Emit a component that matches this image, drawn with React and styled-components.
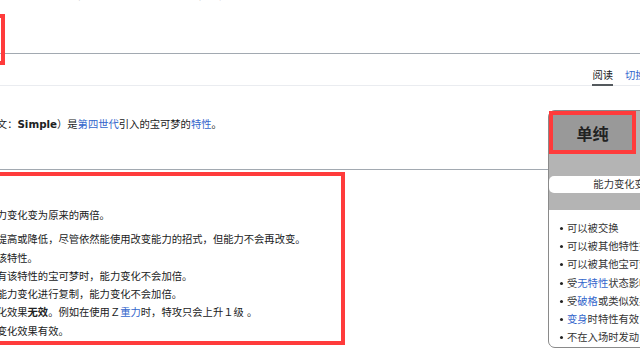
import React from "react";
import styled, { createGlobalStyle } from "styled-components";

const GlobalStyle = createGlobalStyle`
  html, body {
    margin: 0;
    padding: 0;
    background: #fff;
    overflow: hidden;
  }
  body {
    font-family: "DejaVu Sans", "Noto Sans CJK SC", sans-serif;
    font-size: 10.3px;
    color: #202122;
  }
  #root {
    width: 640px;
    height: 360px;
    overflow: hidden;
  }
`;

const RED = "#ff3b3b";
const LINK = "#3366cc";

const Page = styled.div`
  position: relative;
  display: flow-root;
  box-sizing: border-box;
  width: 893px;
  margin-left: -137px;
  padding-right: 4px;
`;

const Notice = styled.div`
  height: 14px;
  margin-top: -12px;
  padding-left: 170px;
  line-height: 14px;
  color: #54595d;
  white-space: nowrap;
`;

const Header = styled.header`
  display: flex;
  align-items: flex-end;
  height: 51px;
  border-bottom: 1px solid #a2a9b1;
`;

const Title = styled.h1`
  margin: 0 0 4px;
  font-family: "Liberation Serif", "Noto Sans CJK SC", serif;
  font-size: 22px;
  font-weight: normal;
  line-height: 30px;
`;

/* annotation frame drawn over the page title */
const TitleMark = styled.span`
  position: absolute;
  left: 60px;
  top: 14px;
  width: 82px;
  height: 51px;
  box-sizing: border-box;
  border: 4px solid ${RED};
`;

const Tabs = styled.nav`
  display: flex;
  justify-content: flex-end;
  align-items: flex-end;
  gap: 12px;
  height: 31px;
  border-bottom: 1px solid #eaecf0;
`;

const Tab = styled.a`
  margin-bottom: -1px;
  line-height: 18px;
  border-bottom: 2px solid ${({ $active }) => ($active ? "#54595d" : "transparent")};
  color: ${({ $active }) => ($active ? "#202122" : LINK)};
  text-decoration: none;
`;

const Body = styled.div`
  display: flex;
  align-items: flex-start;
`;

const Main = styled.main`
  flex: 1;
  min-width: 0;
  padding-top: 29px;
`;

const Lead = styled.p`
  margin: 0;
  line-height: 18.3px;
  white-space: nowrap;
`;

const Link = styled.a`
  color: ${LINK};
  text-decoration: none;
`;

const SectionTitle = styled.h2`
  margin: 17px 0 2px;
  font-family: "Liberation Serif", "Noto Sans CJK SC", serif;
  font-size: 14px;
  font-weight: normal;
  line-height: 19px;
  border-bottom: 1px solid #a2a9b1;
`;

const EffectBox = styled.section`
  box-sizing: border-box;
  width: 482px;
  padding: 6px 0 1px;
  border: 4px solid ${RED};
`;

const SubTitle = styled.h3`
  margin: 0;
  font-size: 10.3px;
  line-height: 18px;
`;

const EffectList = styled.ul`
  margin: ${({ $first }) => ($first ? "6px 0 5.7px" : "0")};
  padding-left: 26.7px;
  white-space: nowrap;

  li {
    line-height: 18.3px;
  }
`;

const Infobox = styled.aside`
  box-sizing: border-box;
  width: 204px;
  margin-top: 24px;
  border: 1px solid #8a8a8a;
  border-radius: 7px;
  background: #b4b4b4;
  color: #333;
`;

const NameRow = styled.div`
  display: flex;
  height: 43px;
`;

const NameCell = styled.div`
  display: flex;
  align-items: center;
  justify-content: center;
  width: ${({ $width }) => $width}px;
  background: ${({ $main }) => ($main ? "#999" : "transparent")};
  font-family: "Noto Sans CJK SC", sans-serif;
  font-size: ${({ $main }) => ($main ? "16px" : "10.3px")};
  font-weight: ${({ $main }) => ($main ? 700 : 400)};
  color: #222;
  outline: ${({ $main }) => ($main ? `4px solid ${RED}` : "none")};
  outline-offset: -4px;
`;

const Band = styled.div`
  height: ${({ $h }) => $h}px;
`;

const Summary = styled.div`
  height: 17px;
  line-height: 17px;
  background: #fff;
  border-radius: 5px;
  text-align: center;
  white-space: nowrap;
  overflow: hidden;
`;

const Notes = styled.ul`
  margin: 0;
  padding: 9px 0 1px 18px;
  list-style: none;
  background: #fff;
  border-radius: 0 0 6px 6px;
  white-space: nowrap;
  overflow: hidden;

  li {
    line-height: 18.2px;
  }

  li::before {
    content: "";
    display: inline-block;
    width: 3px;
    height: 3px;
    margin: 0 4.5px 1px -7.5px;
    border-radius: 50%;
    background: #222;
    vertical-align: middle;
  }
`;

export default function App() {
  return (
    <>
      <GlobalStyle />
      <Page>
        <Notice>
          本条目介绍的是<Link>特性</Link>单纯。关于其他含义，请参见<Link>单纯（消歧义）</Link>。
        </Notice>
        <Header>
          <Title>单纯</Title>
        </Header>
        <TitleMark />
        <Tabs>
          <Tab $active>阅读</Tab>
          <Tab>切换繁简</Tab>
          <Tab>编辑</Tab>
          <Tab>查看历史</Tab>
        </Tabs>
        <Body>
          <Main>
            <Lead>
              <b>单纯</b>（日文：たんじゅん，英文：<b>Simple</b>）是<Link>第四世代</Link>引入的宝可梦的
              <Link>特性</Link>。
            </Lead>
            <SectionTitle>特性效果</SectionTitle>
            <EffectBox>
              <SubTitle>对战中</SubTitle>
              <EffectList $first>
                <li>拥有该特性的宝可梦能力变化变为原来的两倍。</li>
              </EffectList>
              <EffectList>
                <li>如果能力等级无法再被提高或降低，尽管依然能使用改变能力的招式，但能力不会再改变。</li>
                <li>会被破格类似效果无视该特性。</li>
                <li>使用心灵互换来交换拥有该特性的宝可梦时，能力变化不会加倍。</li>
                <li>宝可梦使用自我暗示对能力变化进行复制，能力变化不会加倍。</li>
                <li>
                  对Ｚ招式的附加能力变化效果<b>无效</b>。例如在使用Ｚ<Link>重力</Link>时，特攻只会上升１级 。
                </li>
                <li>对极巨招式的附加能力变化效果有效。</li>
              </EffectList>
            </EffectBox>
          </Main>
          <Infobox>
            <NameRow>
              <NameCell $main $width={87}>单纯</NameCell>
              <NameCell $width={58}>たんじゅん</NameCell>
              <NameCell $width={57}>Simple</NameCell>
            </NameRow>
            <Band $h={22} />
            <Summary>能力变化变为原来的两倍</Summary>
            <Band $h={17} />
            <Notes>
              <li>可以被交换</li>
              <li>可以被其他特性替换</li>
              <li>可以被其他宝可梦获得</li>
              <li>
                受<Link>无特性</Link>状态影响
              </li>
              <li>
                受<Link>破格</Link>或类似效果影响
              </li>
              <li>
                <Link>变身</Link>时特性有效
              </li>
              <li>不在入场时发动</li>
            </Notes>
          </Infobox>
        </Body>
      </Page>
    </>
  );
}
